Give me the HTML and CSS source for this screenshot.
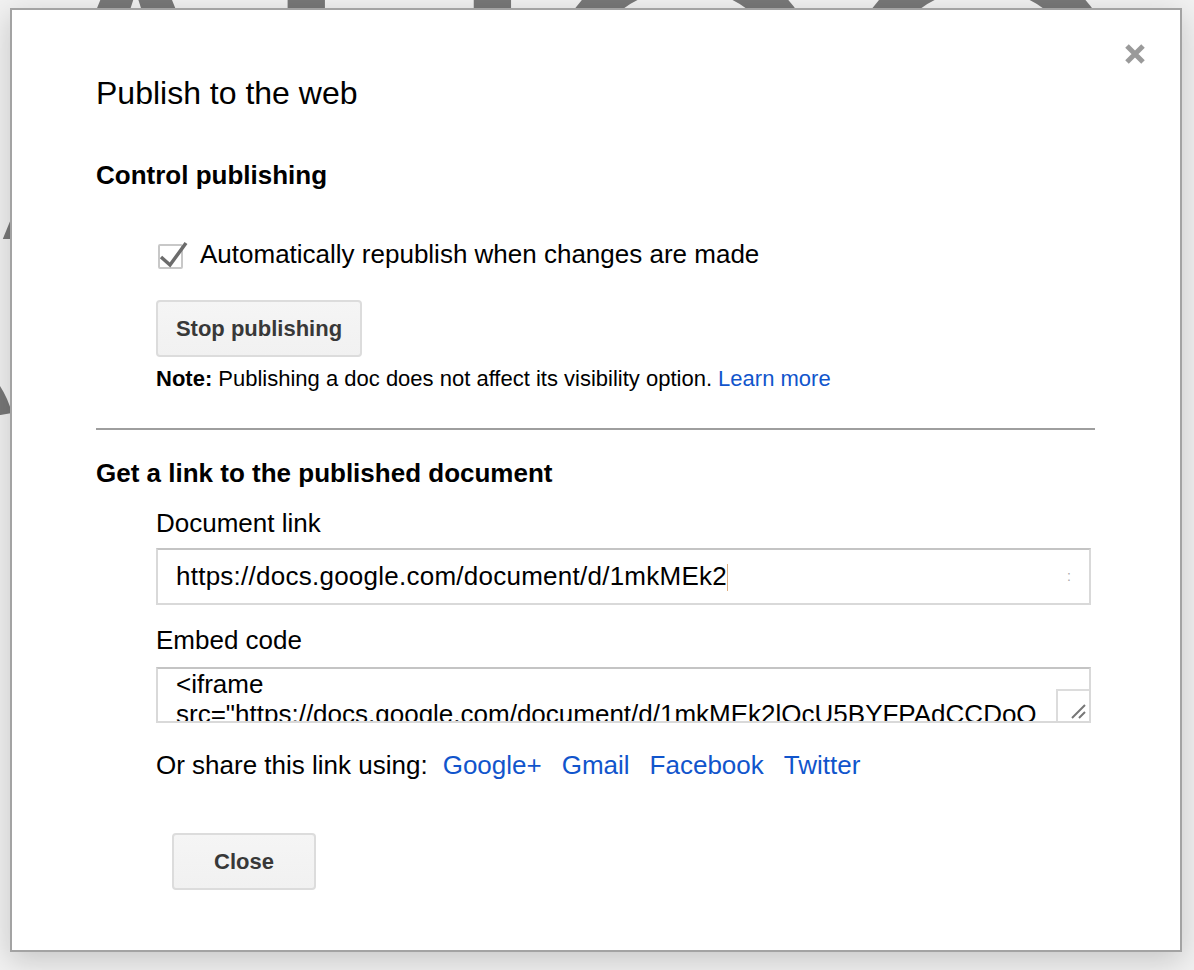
FILE: index.html
```html
<!DOCTYPE html>
<html lang="en">
<head>
<meta charset="utf-8">
<title>Publish to the web</title>
<link rel="stylesheet" href="styles.css">
</head>
<body>
<div class="backdrop" aria-hidden="true">
  <div class="bg-line">AHOOAAHWNV</div>
  <div class="bg-line bg-line2">S</div>
</div>

<div class="dialog" role="dialog" aria-labelledby="dlg-title">
  <button class="close-x" aria-label="Close">
    <svg viewBox="0 0 22 22" width="22" height="22"><path d="M3 3 L19 19 M19 3 L3 19" stroke="#9a9a9a" stroke-width="5" fill="none"/></svg>
  </button>

  <h1 class="title" id="dlg-title">Publish to the web</h1>

  <h2 class="heading">Control publishing</h2>
  <div class="indent">
    <label class="check-row">
      <span class="checkbox">
        <svg class="checkmark" viewBox="0 0 32 30" width="32" height="30"><polyline points="3,17 12,25 28,3" stroke="#6c6c6c" stroke-width="3.5" fill="none"/></svg>
      </span>
      <span>Automatically republish when changes are made</span>
    </label>
    <button class="btn btn-stop">Stop publishing</button>
    <p class="note"><b>Note:</b> Publishing a doc does not affect its visibility option. <a href="#" class="link">Learn more</a></p>
  </div>

  <hr class="divider">

  <h2 class="heading heading-link">Get a link to the published document</h2>
  <div class="indent">
    <div class="label">Document link</div>
    <div class="field input">
      <span class="field-text">https://docs.google.com/document/d/1mkMEk2</span><span class="caret"></span>
      <span class="dots">:</span>
    </div>
    <div class="label label-embed">Embed code</div>
    <div class="field textarea">
      <div class="ta-text">&lt;iframe src="https://docs.google.com/document/d/1mkMEk2lOcU5BYFPAdCCDoQ/pub?embedded=true"&gt;&lt;/iframe&gt;</div>
      <span class="resize">
        <svg viewBox="0 0 31 30" width="31" height="30"><path d="M14 27 L27 14 M21 27 L27 21" stroke="#777" stroke-width="2" fill="none"/></svg>
      </span>
    </div>
    <div class="share">
      <span class="share-label">Or share this link using:</span>
      <a href="#" class="link">Google+</a>
      <a href="#" class="link">Gmail</a>
      <a href="#" class="link">Facebook</a>
      <a href="#" class="link">Twitter</a>
    </div>
  </div>

  <div class="actions">
    <button class="btn btn-close">Close</button>
  </div>
</div>
</body>
</html>
```

FILE: styles.css
```css
html, body {
  margin: 0;
  padding: 0;
}
body {
  width: 1194px;
  height: 970px;
  overflow: hidden;
  background: #f1f1f1;
  font-family: "Liberation Sans", Arial, sans-serif;
  color: #000;
  position: relative;
}

/* page content behind the dialog (only its edges peek out) */
.backdrop {
  width: 1180px;
  height: 415px;
  overflow: hidden;
  color: #787878;
  font-size: 400px;
  line-height: 390px;
  white-space: nowrap;
  letter-spacing: -14px;
}
.bg-line {
  height: 390px;
}
.bg-line:first-child {
  margin-top: -94px;
  padding-left: 2px;
}
.bg-line2 {
  margin-left: -230px;
}

/* dialog */
.dialog {
  position: absolute;
  left: 10px;
  top: 8px;
  width: 1172px;
  height: 944px;
  box-sizing: border-box;
  background: #fff;
  border: 2px solid #a3a3a3;
  box-shadow: 0 8px 28px rgba(0, 0, 0, 0.18);
  padding: 63px 85px 0 84px;
}

.close-x {
  position: absolute;
  top: 33px;
  right: 34px;
  width: 22px;
  height: 22px;
  padding: 0;
  border: 0;
  background: transparent;
  filter: blur(0.6px);
}
.close-x svg {
  display: block;
}

.title {
  margin: 0;
  font-size: 32px;
  line-height: 40px;
  font-weight: normal;
}

.heading {
  margin: 46px 0 0;
  font-size: 26px;
  line-height: 32px;
  font-weight: bold;
}
.heading-link {
  margin-top: 27px;
}

.indent {
  margin-left: 60px;
}

.check-row {
  margin-top: 47px;
  display: flex;
  align-items: center;
  height: 32px;
  font-size: 26px;
  line-height: 32px;
}
.checkbox {
  position: relative;
  width: 25px;
  height: 25px;
  box-sizing: border-box;
  margin: 4px 17px 0 2px;
  border: 2px solid #c8c8c8;
  border-radius: 2px;
  flex: none;
}
.checkmark {
  position: absolute;
  left: -2px;
  top: -6px;
  overflow: visible;
}

.btn {
  display: block;
  height: 57px;
  box-sizing: border-box;
  padding: 0 16px;
  border: 2px solid #dcdcdc;
  border-radius: 4px;
  background: linear-gradient(#f5f5f5, #f1f1f1);
  color: #383838;
  font-family: "Liberation Sans", Arial, sans-serif;
  font-size: 22px;
  font-weight: bold;
  text-align: center;
}
.btn-stop {
  margin-top: 30px;
  width: 206px;
}

.note {
  margin: 8px 0 0;
  font-size: 22px;
  line-height: 28px;
}

.link {
  color: #1155cc;
  text-decoration: none;
}

.divider {
  margin: 35px 0 0;
  height: 0;
  border: 0;
  border-top: 2px solid #9e9e9e;
}

.label {
  margin-top: 18px;
  font-size: 26px;
  line-height: 32px;
}
.label-embed {
  margin-top: 19px;
}

.field {
  position: relative;
  width: 935px;
  box-sizing: border-box;
  border: 2px solid #d9d9d9;
  border-top-color: #c4c4c4;
  font-size: 26px;
}
.input {
  margin-top: 9px;
  height: 57px;
  display: flex;
  align-items: center;
  padding: 0 18px;
  line-height: 53px;
  white-space: nowrap;
}
.field-text {
  letter-spacing: 0.25px;
}
.caret {
  width: 1px;
  height: 27px;
  background: #e0b080;
  margin-top: 2px;
}
.dots {
  margin-left: auto;
  font-size: 14px;
  color: #aaa;
}

.textarea {
  margin-top: 11px;
  height: 56px;
  overflow: hidden;
  padding: 0 52px 0 18px;
}
.ta-text {
  line-height: 30px;
  overflow-wrap: anywhere;
}
.resize {
  position: absolute;
  right: 0;
  bottom: 0;
  width: 33px;
  height: 32px;
  box-sizing: border-box;
  border-top: 2px solid #dcdcdc;
  border-left: 2px solid #dcdcdc;
  background: #fff;
}
.resize svg {
  display: block;
}

.share {
  margin-top: 26px;
  display: flex;
  column-gap: 20px;
  font-size: 26px;
  line-height: 32px;
  white-space: nowrap;
}
.share-label {
  margin-right: -5px;
}

.actions {
  margin: 52px 0 0 76px;
}
.btn-close {
  min-width: 144px;
}
```
